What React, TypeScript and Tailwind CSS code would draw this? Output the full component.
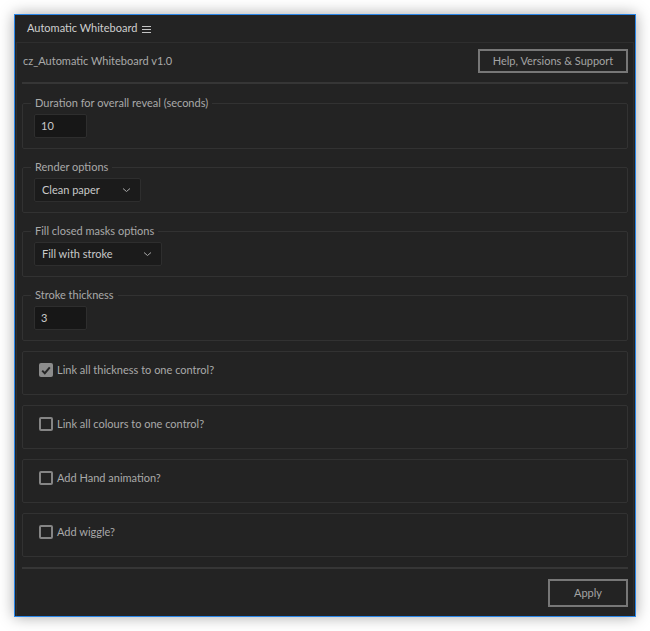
const font = { fontFamily: "Lato, 'Noto Sans', sans-serif" };

const Chevron = () => (
  <svg width="9" height="6" viewBox="0 0 9 6" className="ml-auto">
    <path d="M1 1.5 L4.5 4.5 L8 1.5" fill="none" stroke="#a8a8a8" strokeWidth="1" />
  </svg>
);

const Group = ({ label, children }: { label: string; children: React.ReactNode }) => (
  <fieldset className="mt-[11px] border border-[#323232] rounded-[2px] pl-[11px] pb-[10px]">
    <legend className="ml-[-3px] px-[4px] text-[11px] leading-[14px] text-[#a9a9a9]">{label}</legend>
    <div className="mt-[4px]">{children}</div>
  </fieldset>
);

const NumberBox = ({ value }: { value: string }) => (
  <div className="w-[53px] h-[24px] bg-[#171717] border border-[#2e2e2e] rounded-[2px] flex items-center pl-[6px] text-[11px] text-[#c9c9c9]">
    {value}
  </div>
);

const Select = ({ value, width }: { value: string; width: string }) => (
  <div
    className={`${width} h-[24px] bg-[#1b1b1b] border border-[#2e2e2e] rounded-[2px] flex items-center pl-[7px] pr-[9px] text-[11px] text-[#c9c9c9]`}
  >
    <span>{value}</span>
    <Chevron />
  </div>
);

const Check = ({ label, checked }: { label: string; checked?: boolean }) => (
  <div className="mt-[10px] h-[44px] border border-[#323232] rounded-[2px] pl-[16px] pt-[11px]">
    <div className="flex items-center gap-[4px] h-[14px]">
      {checked ? (
        <div className="w-[14px] h-[14px] rounded-[2px] bg-[#8c8c8c] flex items-center justify-center">
          <svg width="10" height="9" viewBox="0 0 10 9">
            <path d="M1.2 4.6 L3.8 7.2 L8.8 1.4" fill="none" stroke="#262626" strokeWidth="2" />
          </svg>
        </div>
      ) : (
        <div className="w-[14px] h-[14px] rounded-[2px] border-2 border-[#858585]" />
      )}
      <span className="text-[11px] text-[#a9a9a9]">{label}</span>
    </div>
  </div>
);

export default function App() {
  return (
    <div className="min-h-screen bg-white pt-[14px] pl-[14px]" style={font}>
      <div className="w-[622px] h-[603px] bg-[#232323] border border-[#2a86e8] shadow-[0_0_14px_rgba(0,0,0,0.35)] flex flex-col">
        <div className="h-[27px] flex items-center pl-[12px] gap-[5px] text-[11px] text-[#cfcfcf]">
          <span>Automatic Whiteboard</span>
          <svg width="9" height="8" viewBox="0 0 9 8">
            <path d="M0 1.5 H9 M0 4.5 H9 M0 7.5 H9" stroke="#c4c4c4" strokeWidth="1" />
          </svg>
        </div>
        <div className="flex-1 mx-[1px] border-t border-l border-r border-[#2e2e2e] pl-[5px] pr-[5px] flex flex-col">
          <div className="flex items-center justify-between pt-[6px]">
            <span className="pl-[1px] text-[11px] text-[#a9a9a9]">cz_Automatic Whiteboard v1.0</span>
            <button className="w-[150px] h-[24px] border-2 border-[#777777] text-[11px] text-[#a3a3a3]">
              Help, Versions &amp; Support
            </button>
          </div>
          <div className="mt-[9px] h-[2px] bg-[#363636]" />

          <div className="mt-[1px]">
            <Group label="Duration for overall reveal (seconds)">
              <NumberBox value="10" />
            </Group>
            <Group label="Render options">
              <Select value="Clean paper" width="w-[107px]" />
            </Group>
            <Group label="Fill closed masks options">
              <Select value="Fill with stroke" width="w-[128px]" />
            </Group>
            <Group label="Stroke thickness">
              <NumberBox value="3" />
            </Group>
            <Check label="Link all thickness to one control?" checked />
            <Check label="Link all colours to one control?" />
            <Check label="Add Hand animation?" />
            <Check label="Add wiggle?" />
          </div>

          <div className="mt-[10px] h-[2px] bg-[#363636]" />
          <div className="flex justify-end mt-[10px]">
            <button className="w-[80px] h-[28px] border-2 border-[#777777] text-[11px] text-[#a3a3a3]">
              Apply
            </button>
          </div>
        </div>
      </div>
    </div>
  );
}
